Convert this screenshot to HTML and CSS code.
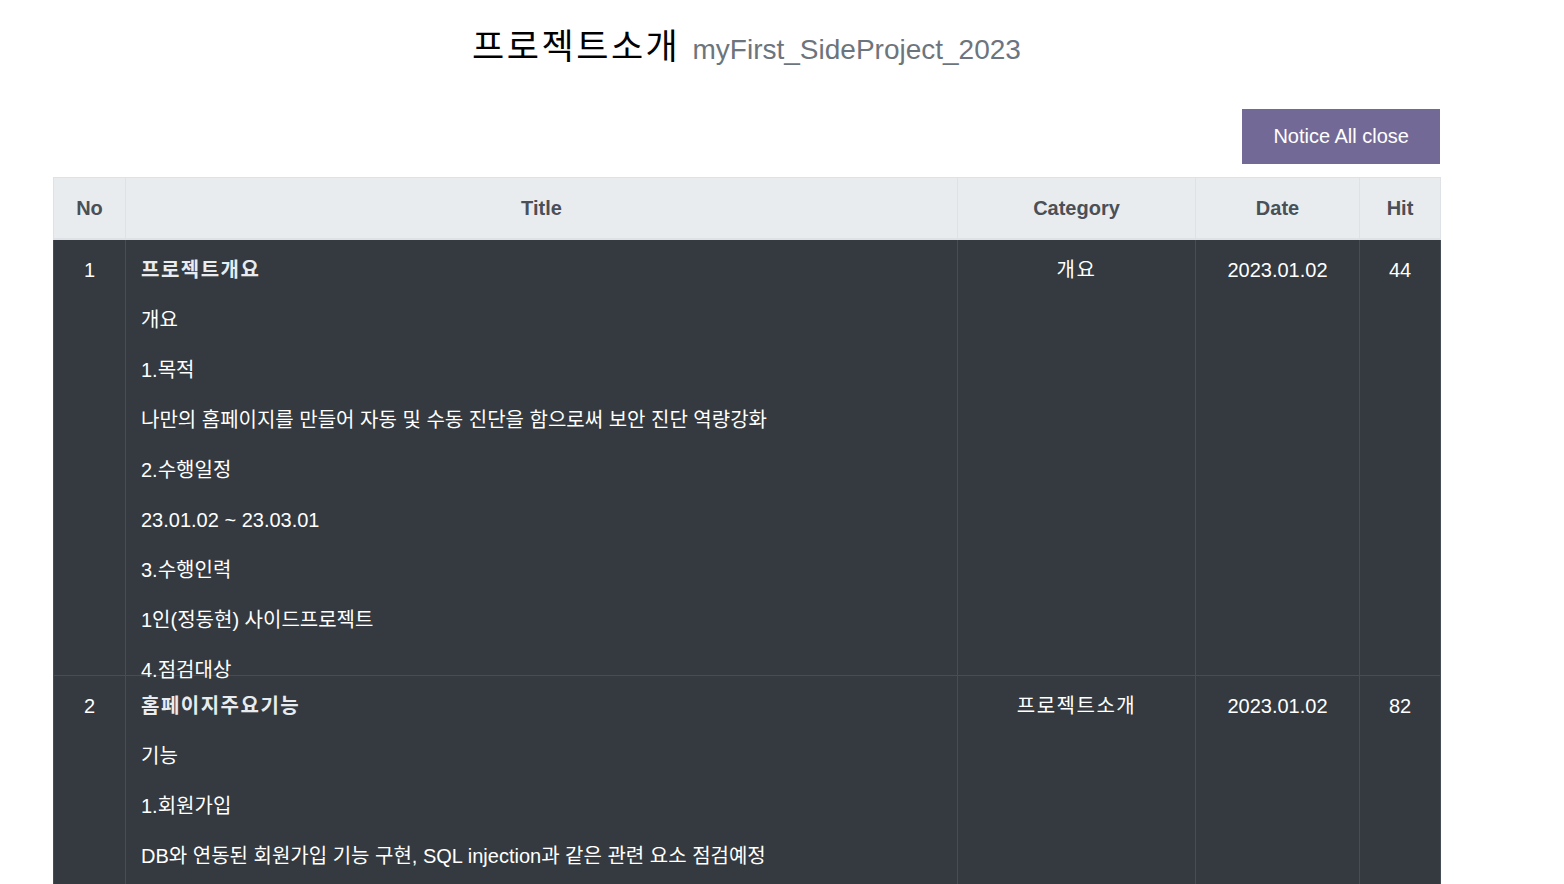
FILE: index.html
```html
<!DOCTYPE html>
<html lang="ko">
<head>
  <meta charset="UTF-8" />
  <title>프로젝트소개 - myFirst_SideProject_2023</title>
  <link rel="stylesheet" href="styles.css">
</head>
<body>
  <div class="board">
    <h1 class="page-title">프로젝트소개 <small>myFirst_SideProject_2023</small></h1>

    <div class="board-tools">
      <button class="btn-notice">Notice All close</button>
    </div>

    <table class="board-table">
      <colgroup>
        <col class="col-no">
        <col class="col-title">
        <col class="col-category">
        <col class="col-date">
        <col class="col-hit">
      </colgroup>
      <thead>
        <tr>
          <th>No</th>
          <th>Title</th>
          <th>Category</th>
          <th>Date</th>
          <th>Hit</th>
        </tr>
      </thead>
      <tbody>
        <tr>
          <td>1</td>
          <td class="title-cell">
            <div class="preview">
              <p><strong>프로젝트개요</strong></p>
              <p>개요</p>
              <p>1.목적</p>
              <p>나만의 홈페이지를 만들어 자동 및 수동 진단을 함으로써 보안 진단 역량강화</p>
              <p>2.수행일정</p>
              <p>23.01.02 ~ 23.03.01</p>
              <p>3.수행인력</p>
              <p>1인(정동현) 사이드프로젝트</p>
              <p>4.점검대상</p>
            </div>
          </td>
          <td class="category">개요</td>
          <td>2023.01.02</td>
          <td>44</td>
        </tr>
        <tr>
          <td>2</td>
          <td class="title-cell">
            <div class="preview">
              <p><strong>홈페이지주요기능</strong></p>
              <p>기능</p>
              <p>1.회원가입</p>
              <p>DB와 연동된 회원가입 기능 구현, SQL injection과 같은 관련 요소 점검예정</p>
            </div>
          </td>
          <td class="category">프로젝트소개</td>
          <td>2023.01.02</td>
          <td>82</td>
        </tr>
      </tbody>
    </table>
  </div>
</body>
</html>
```

FILE: styles.css
```css
html {
  font-size: 20px;
}
body {
  font-family: "Liberation Sans", Arial, "Noto Sans CJK KR", sans-serif;
  margin: 0;
  background: #fff;
  color: #212529;
  line-height: 1.5;
}
.board {
  width: 1387px;
  margin-left: 53px;
}
.page-title {
  text-align: center;
  font-size: 35px;
  font-weight: normal;
  line-height: 1.2;
  letter-spacing: 2.5px;
  margin: 26px 0 41px;
  color: #000;
}
.page-title small {
  font-size: 80%;
  letter-spacing: 0;
  color: #6c757d;
}
.board-tools {
  display: flex;
  justify-content: flex-end;
  margin-bottom: 13px;
}
.btn-notice {
  font-family: inherit;
  font-size: 20px;
  line-height: 31px;
  padding: 12px 31px;
  border: 0;
  background: #736996;
  color: #fff;
  cursor: pointer;
}
.board-table {
  width: 100%;
  border-collapse: collapse;
  table-layout: fixed;
}
.col-no { width: 72px; }
.col-title { width: 832px; }
.col-category { width: 238px; }
.col-date { width: 164px; }
.col-hit { width: 81px; }
.board-table th,
.board-table td {
  padding: 15px;
  vertical-align: top;
  text-align: center;
}
.board-table th {
  background: #e9ecef;
  color: #495057;
  border: 1px solid #dee2e6;
  border-bottom-width: 2px;
}
.board-table td {
  background: #343a40;
  color: #fff;
  border: 1px solid #454d55;
}
.board-table td.title-cell {
  text-align: left;
}
.board-table td.category {
  letter-spacing: 1.5px;
}
.preview {
  height: 405px;
}
.preview p {
  margin: 0 0 20px;
}
.preview strong {
  color: #e9ecef;
  letter-spacing: 1.5px;
}
```
